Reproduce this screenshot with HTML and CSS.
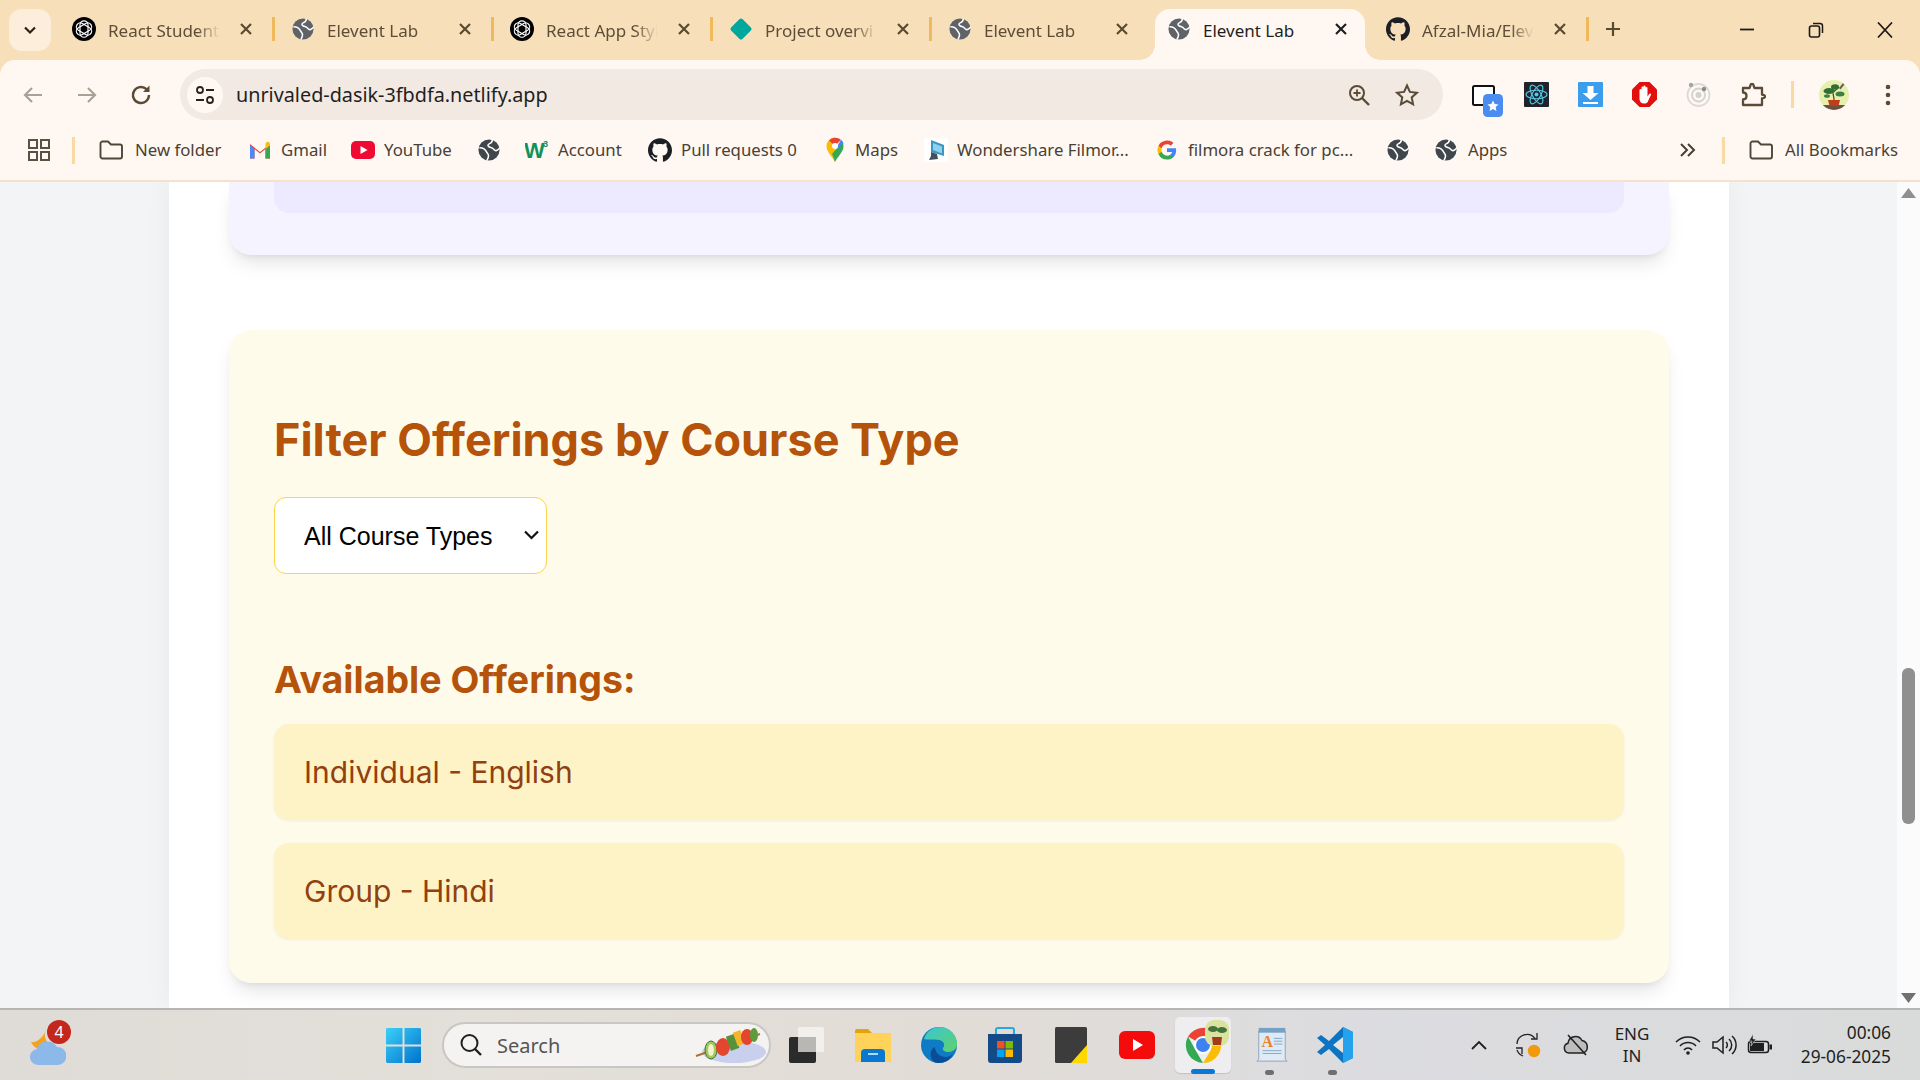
FILE: index.html
```html
<!DOCTYPE html>
<html lang="en">
<head>
<meta charset="utf-8">
<title>Elevent Lab</title>
<link rel="stylesheet" href="styles.css">
</head>
<body>
<svg class="defs" aria-hidden="true">
  <symbol id="globe" viewBox="0 0 24 24"><circle cx="12" cy="12" r="11.500" fill="currentColor"/><path fill="none" stroke="#fff" stroke-width="1.700" d="M1.500 9.500c3.500-.2 6 1.300 7.300 3.800 1 2 2.700 3 2.700 5 0 1.800-1 3.500-1.800 5M15.500 .8c.3 2.500-1.500 3.700-3.300 4.500-1.700.8-1.700 2.300-.2 3.200 1.800 1 3.500.5 4.700 2.300 1 1.500 2 2.300 3.500 1.700 1.300-.5 2.500-1.500 3.500-2.800"/></symbol>
  <symbol id="gpt" viewBox="0 0 24 24"><circle cx="12" cy="12" r="12" fill="#000"/><g fill="none" stroke="#fff" stroke-width="1.150"><rect x="8" y="3.800" width="8" height="16.400" rx="4"/><rect x="8" y="3.800" width="8" height="16.400" rx="4" transform="rotate(60 12 12)"/><rect x="8" y="3.800" width="8" height="16.400" rx="4" transform="rotate(120 12 12)"/></g></symbol>
  <symbol id="github" viewBox="0 0 24 24"><path fill="currentColor" d="M12 .297c-6.630 0-12 5.373-12 12 0 5.303 3.438 9.800 8.205 11.385.6.113.82-.258.82-.577 0-.285-.01-1.040-.015-2.040-3.338.724-4.042-1.610-4.042-1.610C4.422 18.070 3.633 17.700 3.633 17.700c-1.087-.744.084-.729.084-.729 1.205.084 1.838 1.236 1.838 1.236 1.070 1.835 2.809 1.305 3.495.998.108-.776.417-1.305.76-1.605-2.665-.3-5.466-1.332-5.466-5.930 0-1.310.465-2.380 1.235-3.220-.135-.303-.54-1.523.105-3.176 0 0 1.005-.322 3.300 1.230.96-.267 1.980-.399 3-.405 1.020.006 2.040.138 3 .405 2.280-1.552 3.285-1.230 3.285-1.230.645 1.653.24 2.873.12 3.176.765.84 1.230 1.910 1.230 3.220 0 4.610-2.805 5.625-5.475 5.920.42.36.81 1.096.81 2.220 0 1.606-.015 2.896-.015 3.286 0 .315.21.69.825.57C20.565 22.092 24 17.592 24 12.297c0-6.627-5.373-12-12-12"/></symbol>
  <symbol id="x" viewBox="0 0 16 16"><path d="M3 3l10 10M13 3L3 13" fill="none" stroke="currentColor" stroke-width="2.200"/></symbol>
  <symbol id="folder" viewBox="0 0 24 20"><path d="M1.500 3.500a2 2 0 0 1 2-2h5.500l3 3h9a2 2 0 0 1 2 2v10a2 2 0 0 1-2 2h-17.500a2 2 0 0 1-2-2z" fill="none" stroke="currentColor" stroke-width="1.900"/></symbol>
</svg>

<header class="strip">
  <button class="tabs-menu" type="button"><svg class="i14" viewBox="0 0 14 14"><path d="M2 4.500l5 5 5-5" fill="none" stroke="#2a2118" stroke-width="2.200"/></svg></button>
  <div class="tab"><span class="fav"><svg class="i24"><use href="#gpt"/></svg></span><span class="title">React Student</span><svg class="close"><use href="#x"/></svg></div><i class="sep"></i>
  <div class="tab"><span class="fav grey"><svg class="i22"><use href="#globe"/></svg></span><span class="title">Elevent Lab</span><svg class="close"><use href="#x"/></svg></div><i class="sep"></i>
  <div class="tab"><span class="fav"><svg class="i24"><use href="#gpt"/></svg></span><span class="title">React App Styl</span><svg class="close"><use href="#x"/></svg></div><i class="sep"></i>
  <div class="tab"><span class="fav"><svg class="i24" viewBox="0 0 24 24"><rect x="4" y="4" width="16" height="16" rx="2" fill="#00a79d" transform="rotate(45 12 12)"/></svg></span><span class="title">Project overvi</span><svg class="close"><use href="#x"/></svg></div><i class="sep"></i>
  <div class="tab"><span class="fav grey"><svg class="i22"><use href="#globe"/></svg></span><span class="title">Elevent Lab</span><svg class="close"><use href="#x"/></svg></div><i class="sep off"></i>
  <div class="tab active"><span class="flare flare-l"></span><span class="flare flare-r"></span><span class="fav grey"><svg class="i22"><use href="#globe"/></svg></span><span class="title">Elevent Lab</span><svg class="close"><use href="#x"/></svg></div><i class="sep off"></i>
  <div class="tab"><span class="fav dark"><svg class="i24"><use href="#github"/></svg></span><span class="title">Afzal-Mia/Elev</span><svg class="close"><use href="#x"/></svg></div><i class="sep"></i>
  <svg class="plus" viewBox="0 0 16 16"><path d="M8 1v14M1 8h14" stroke="#5b4a33" stroke-width="2.200"/></svg>
  <div class="winctl">
    <svg class="i16" viewBox="0 0 16 16"><path d="M1 7.500h14" stroke="#1d1a16" stroke-width="1.800"/></svg>
    <svg class="i16" viewBox="0 0 16 16"><rect x="1.500" y="4" width="10" height="11" rx="2" fill="none" stroke="#1d1a16" stroke-width="1.600"/><path d="M5 1.500h7a2.500 2.500 0 0 1 2.500 2.500v7" fill="none" stroke="#1d1a16" stroke-width="1.500"/></svg>
    <svg class="i16" viewBox="0 0 16 16"><path d="M1 .5l14 15M15 .5L1 15.500" stroke="#1d1a16" stroke-width="1.700"/></svg>
  </div>
</header>

<nav class="toolbar">
  <span class="tb"><svg class="i24" viewBox="0 0 24 24"><path d="M21 12H4M11 5l-7 7 7 7" fill="none" stroke="#a9a198" stroke-width="2.200"/></svg></span>
  <span class="tb ml18"><svg class="i24" viewBox="0 0 24 24"><path d="M3 12h17M13 5l7 7-7 7" fill="none" stroke="#a9a198" stroke-width="2.200"/></svg></span>
  <span class="tb ml18"><svg class="i24" viewBox="0 0 24 24"><path d="M20 12a8 8 0 1 1-2.500-5.800" fill="none" stroke="#5a4a36" stroke-width="2.400"/><path d="M20.500 2.500v6.500h-6.500z" fill="#5a4a36"/></svg></span>
  <div class="omni">
    <span class="tune"><svg class="i22" viewBox="0 0 22 22"><circle cx="6" cy="6" r="3" fill="none" stroke="#2a2118" stroke-width="1.800"/><path d="M12 6h8M2 16h8" stroke="#2a2118" stroke-width="1.800"/><circle cx="16" cy="16" r="3" fill="none" stroke="#2a2118" stroke-width="1.800"/></svg></span>
    <span class="url">unrivaled-dasik-3fbdfa.netlify.app</span>
    <span class="tb"><svg class="i24" viewBox="0 0 24 24"><circle cx="10" cy="10" r="7" fill="none" stroke="#5a4a36" stroke-width="2"/><path d="M15 15l7 7" stroke="#5a4a36" stroke-width="2.400"/><path d="M10 6.500v7M6.500 10h7" stroke="#5a4a36" stroke-width="1.800"/></svg></span>
    <span class="tb ml12"><svg class="i24" viewBox="0 0 24 24"><path d="M12 2.500l2.900 6.400 7 .8-5.200 4.700 1.400 6.900-6.100-3.500-6.100 3.500 1.400-6.900-5.200-4.700 7-.8z" fill="none" stroke="#5a4a36" stroke-width="2"/></svg></span>
  </div>
  <span class="tb ml27"><svg class="ext-star" viewBox="0 0 32 32"><rect x="1" y="1" width="21" height="19" rx="1.500" fill="#fff" stroke="#111" stroke-width="2"/><rect x="11" y="9" width="20" height="23" rx="4.500" fill="#4a8cf0"/><path d="M21 15.500l1.700 3.500 3.800.5-2.800 2.600.7 3.800-3.400-1.800-3.400 1.800.7-3.800-2.800-2.600 3.800-.5z" fill="#fff"/></svg></span>
  <span class="tb ml12"><svg class="i25" viewBox="0 0 25 25"><rect width="25" height="25" rx="1" fill="#20232a"/><g fill="none" stroke="#55c8e8" stroke-width="1.100"><ellipse cx="12.500" cy="12.500" rx="10.500" ry="4.200"/><ellipse cx="12.500" cy="12.500" rx="10.500" ry="4.200" transform="rotate(60 12.500 12.500)"/><ellipse cx="12.500" cy="12.500" rx="10.500" ry="4.200" transform="rotate(120 12.500 12.500)"/></g><circle cx="12.500" cy="12.500" r="2" fill="#55c8e8"/></svg></span>
  <span class="tb ml18"><svg class="i25" viewBox="0 0 25 25"><rect width="25" height="25" rx="1" fill="#3b9dee"/><path d="M9.500 4h6v7h5l-8 7-8-7h5z" fill="#fff"/><rect x="5" y="20" width="15" height="2" fill="#fff"/></svg></span>
  <span class="tb ml18"><svg class="i25" viewBox="0 0 25 25"><path d="M7.500 0h10l7.500 7.500v10L17.500 25h-10L0 17.500v-10z" fill="#e30f0f"/><path d="M7.500 13.500V8a1 1 0 0 1 2 0v4V5.500a1 1 0 0 1 2 0V12V4.500a1 1 0 0 1 2 0V12V6a1 1 0 0 1 2 0v8.500l1.500-2.300c.9-1.200 2.500-.4 1.900.9l-2.800 6C15.800 20.500 14.500 21.500 13 21.500h-1c-2.800 0-4.500-2-4.500-4.500z" fill="#fff"/></svg></span>
  <span class="tb ml18"><svg class="i25" viewBox="0 0 25 25"><circle cx="12.500" cy="13" r="11" fill="none" stroke="#dcdad6" stroke-width="1.800"/><circle cx="12.500" cy="13" r="6.500" fill="none" stroke="#d4d2ce" stroke-width="1.800"/><circle cx="12.500" cy="13" r="3" fill="#d4d2ce"/><circle cx="5" cy="3" r="2.200" fill="#a8a6a2"/><circle cx="18" cy="7" r="2.200" fill="#8d8b88"/></svg></span>
  <span class="tb ml19"><svg class="i25" viewBox="0 0 25 25"><path d="M2 6h6.500c.2-1 .8-1.500 1-3 .3-1.500 2.700-1.500 3 0 .2 1.500.8 2 1 3H21v6.500c1 .2 1.600.5 2.200.7 1 .4 1 2.200 0 2.600-.6.2-1.200.5-2.200.7V23H2v-5.500c2 0 3.500-1.500 3.500-3.500S4 10.500 2 10.500z" fill="none" stroke="#5a4a36" stroke-width="2.300" stroke-linejoin="round"/></svg></span>
  <i class="tsep"></i>
  <span class="tb ml22"><svg class="i30" viewBox="0 0 30 30"><defs><clipPath id="avc"><circle cx="15" cy="15" r="15"/></clipPath></defs><g clip-path="url(#avc)"><rect width="30" height="30" fill="#e7efad"/><rect y="25" width="30" height="5" fill="#6b5142"/><path d="M9 20h12l-1.500 6h-9z" fill="#bf3d1c"/><path d="M15 20c0-5-2-7-1-11M14 12c2-1 4-3 6-5" stroke="#5a4a2a" stroke-width="1.300" fill="none"/><ellipse cx="10" cy="11" rx="5.500" ry="3" fill="#2f6e35"/><ellipse cx="16" cy="7" rx="4" ry="2.800" fill="#2f6e35"/><ellipse cx="21" cy="14" rx="4.500" ry="2.500" fill="#3b8040"/><ellipse cx="8" cy="16" rx="3" ry="1.800" fill="#3b8040"/><path d="M20 8l4-5 1.500 1.500-4 5z" fill="#66625c"/></g></svg></span>
  <span class="tb ml18"><svg class="i24" viewBox="0 0 24 24"><circle cx="12" cy="4" r="2.300" fill="#5a4a36"/><circle cx="12" cy="12" r="2.300" fill="#5a4a36"/><circle cx="12" cy="20" r="2.300" fill="#5a4a36"/></svg></span>
</nav>

<nav class="bookmarks">
  <span class="bm"><svg class="i22" viewBox="0 0 22 22"><g fill="none" stroke="#5a5046" stroke-width="2"><rect x="1" y="1" width="8" height="8"/><rect x="13" y="1" width="8" height="8"/><rect x="1" y="13" width="8" height="8"/><rect x="13" y="13" width="8" height="8"/></g></svg></span>
  <i class="bsep"></i>
  <span class="bm wide"><svg class="bi folder"><use href="#folder"/></svg><span>New folder</span></span>
  <span class="bm"><svg class="bi" viewBox="0 0 24 20"><path d="M2 18.500V4l10 8 10-8v14.500h-4.500V9L12 13.500 6.500 9v9.500z" fill="#e8463a"/><path d="M2 18.500h4.500V9L2 5z" fill="#4a8af4"/><path d="M22 18.500h-4.500V9L22 5z" fill="#34a853"/><path d="M17.500 9L22 5.500V3.800c0-1.800-2-2.500-3.300-1.500l-1.200 1z" fill="#f9bc15"/></svg><span>Gmail</span></span>
  <span class="bm"><svg class="bi" viewBox="0 0 24 20"><rect y="1" width="24" height="18" rx="5" fill="#f00a33"/><path d="M9.500 6l7 4-7 4z" fill="#fff"/></svg><span>YouTube</span></span>
  <span class="bm"><svg class="i22 slate"><use href="#globe"/></svg></span>
  <span class="bm"><svg class="bi w3" viewBox="0 0 24 22"><text x="-1" y="19" class="w3-w">W</text><text x="18" y="8" class="w3-s">3</text></svg><span>Account</span></span>
  <span class="bm"><svg class="bi gh"><use href="#github"/></svg><span>Pull requests 0</span></span>
  <span class="bm"><svg class="pin" viewBox="0 0 18 26"><path d="M9 25C6 19 .5 15 .5 9a8.500 8.500 0 0 1 8.500-8.500z" fill="#fbbc04"/><path d="M9 25c3-6 8.500-10 8.500-16 0-1.500-.4-3-1.100-4.200L6 17c1.200 2.500 2.200 5 3 8z" fill="#34a853"/><path d="M3 3.500A8.500 8.500 0 0 1 15 2.800L9 9z" fill="#ea4335"/><path d="M15 2.800c1 .9 1.900 2 2.500 3.500L9 13z" fill="#4285f4"/><circle cx="9" cy="9" r="3" fill="#fff"/></svg><span>Maps</span></span>
  <span class="bm"><svg class="bi" viewBox="0 0 24 24"><rect width="24" height="24" fill="#fff"/><path d="M7 2l13 5v11L7 14z" fill="#3a96c4"/><path d="M9 5l9 3.500v7L9 12z" fill="#8fd0ea"/><path d="M7 14l6 2 1 5-9 1 2-4z" fill="#43505a"/></svg><span>Wondershare Filmor...</span></span>
  <span class="bm wide"><svg class="g" viewBox="0 0 24 24"><path d="M23 12.300c0-.8-.1-1.600-.2-2.300H12v4.400h6.200a5.300 5.300 0 0 1-2.300 3.400v2.900h3.700c2.100-2 3.400-4.900 3.400-8.400z" fill="#4285f4"/><path d="M12 23.500c3.100 0 5.700-1 7.600-2.800l-3.700-2.900c-1 .7-2.400 1.100-3.900 1.100-3 0-5.500-2-6.400-4.700H1.800v3A11.500 11.500 0 0 0 12 23.500z" fill="#34a853"/><path d="M5.600 14.200a6.900 6.900 0 0 1 0-4.400v-3H1.800a11.500 11.500 0 0 0 0 10.400z" fill="#fbbc05"/><path d="M12 5.100c1.700 0 3.200.6 4.400 1.700l3.300-3.300A11.500 11.500 0 0 0 1.800 6.800l3.800 3c.9-2.700 3.400-4.700 6.400-4.700z" fill="#ea4335"/></svg><span>filmora crack for pc...</span></span>
  <span class="bm"><svg class="i22 slate"><use href="#globe"/></svg></span>
  <span class="bm wide"><svg class="i22 slate"><use href="#globe"/></svg><span>Apps</span></span>
  <span class="bm"><svg class="i20" viewBox="0 0 20 20"><path d="M3 4l6 6-6 6M10 4l6 6-6 6" fill="none" stroke="#4a3f33" stroke-width="2"/></svg></span>
  <i class="bsep"></i>
  <span class="bm wide folder-item"><svg class="bi folder"><use href="#folder"/></svg><span>All Bookmarks</span></span>
</nav>

<div class="viewport">
  <div class="gutter"></div>
  <main class="sheet">
    <section class="card card-violet"><div class="violet-inner"></div></section>
    <section class="card card-amber">
      <h2>Filter Offerings by Course Type</h2>
      <div class="select-wrap">
        <select class="course-select"><option>All Course Types</option><option>Individual</option><option>Group</option></select>
        <svg class="select-arrow" viewBox="0 0 16 10"><path d="M1.500 1.500L8 8l6.500-6.500" fill="none" stroke="#111" stroke-width="2.200"/></svg>
      </div>
      <h3>Available Offerings:</h3>
      <ul class="offerings">
        <li>Individual - English</li>
        <li>Group - Hindi</li>
      </ul>
    </section>
  </main>
  <div class="gutter"></div>
  <div class="scrollbar">
    <svg class="arrow" viewBox="0 0 15 10"><path d="M7.500 0L15 10H0z" fill="#8f8f8f"/></svg>
    <div class="thumb"></div>
    <svg class="arrow down" viewBox="0 0 15 10"><path d="M0 0h15L7.500 10z" fill="#707070"/></svg>
  </div>
</div>

<footer class="taskbar">
  <span class="weather"><svg class="i36x" viewBox="0 0 36 40"><path d="M16 4a12 12 0 0 0 6 16A13 13 0 0 1 1 16c4 1 12-3 15-12z" fill="#f3a323"/><path d="M9 39a8 8 0 0 1-2-16 11 11 0 0 1 20-2 9 9 0 0 1 1 18z" fill="#8db8ea"/></svg><b class="badge">4</b></span>
  <span class="tk"><svg class="win" viewBox="0 0 36 36"><defs><linearGradient id="wg" x1="0" y1="0" x2="1" y2="1"><stop offset="0" stop-color="#3cd0f8"/><stop offset="1" stop-color="#0072cc"/></linearGradient></defs><path d="M0 1.500A1.500 1.500 0 0 1 1.500 0H17v17H0zM19 0h15.500A1.500 1.500 0 0 1 36 1.500V17H19zM0 19h17v17H1.500A1.500 1.500 0 0 1 0 34.500zM19 19h17v15.500a1.500 1.500 0 0 1-1.500 1.500H19z" fill="url(#wg)"/></svg></span>
  <div class="search">
    <svg class="i24" viewBox="0 0 24 24"><circle cx="10.500" cy="10" r="8" fill="none" stroke="#1f1f1f" stroke-width="2"/><path d="M16 16l6 6" stroke="#1f1f1f" stroke-width="2.400"/></svg>
    <span class="search-label">Search</span>
    <svg class="kebab" viewBox="0 0 72 38"><ellipse cx="40" cy="26" rx="32" ry="11" fill="#c8d0ee"/><path d="M2 30L66 8" stroke="#a8743a" stroke-width="2"/><ellipse cx="17" cy="24" rx="6" ry="9" fill="#9ecb5c" stroke="#416d25"/><ellipse cx="17" cy="24" rx="3" ry="6" fill="#f1f3d0"/><ellipse cx="29" cy="21" rx="7" ry="9" fill="#e4452e"/><rect x="34" y="9" width="9" height="15" fill="#57913a" transform="rotate(-20 38 16)"/><rect x="41" y="5" width="8" height="14" fill="#f3b52b" transform="rotate(-20 45 12)"/><ellipse cx="53" cy="11" rx="6" ry="8" fill="#e4452e"/><ellipse cx="60" cy="9" rx="4" ry="7" fill="#5d9c3b"/></svg>
  </div>
  <span class="tk"><svg class="i36" viewBox="0 0 36 36"><rect x="9" y="0" width="26" height="25" rx="1.500" fill="#f3f2f0" opacity=".9"/><rect y="10" width="27" height="26" rx="2" fill="#2b2b2b"/><rect x="9" y="10" width="18" height="15" fill="#b9b7b4"/></svg></span>
  <span class="tk"><svg class="i36" viewBox="0 0 36 36"><path d="M0 4a2 2 0 0 1 2-2h11l4 4H0z" fill="#e2a30d"/><path d="M0 6h36v29H0z" fill="#ffd35a"/><path d="M6 35v-9a4 4 0 0 1 4-4h16a4 4 0 0 1 4 4v9z" fill="#0a78cf"/><rect x="13" y="26" width="10" height="2" fill="#a9dbff"/></svg></span>
  <span class="tk"><svg class="i36" viewBox="0 0 36 36"><defs><linearGradient id="eg" x1="0" y1="0" x2="1" y2="1"><stop offset="0" stop-color="#39c6d6"/><stop offset="1" stop-color="#5fd26a"/></linearGradient></defs><circle cx="18" cy="18" r="18" fill="#0f7bc5"/><path d="M3 12C6 3 13 0 19 0c10 0 17 8 17 17 0 5-4 8-9 8-3 0-6-2-5-4 2-2 2-7-4-8-6-1-12 0-15-1z" fill="url(#eg)"/><path d="M14 20c0 6 5 10 11 10 2 0 5-1 7-3-3 6-9 9-14 9-4 0-7-2-8-6-1-4 0-8 4-10z" fill="#0a4d96"/></svg></span>
  <span class="tk"><svg class="i36" viewBox="0 0 36 36"><path d="M9 7V3a2 2 0 0 1 2-2h14a2 2 0 0 1 2 2v4" fill="none" stroke="#25a9e0" stroke-width="2"/><path d="M1 7h34v26a3 3 0 0 1-3 3H4a3 3 0 0 1-3-3z" fill="#144b86"/><rect x="10" y="14" width="7.500" height="7.500" fill="#f25022"/><rect x="18.500" y="14" width="7.500" height="7.500" fill="#7fba00"/><rect x="10" y="22.500" width="7.500" height="7.500" fill="#00a4ef"/><rect x="18.500" y="22.500" width="7.500" height="7.500" fill="#ffb900"/></svg></span>
  <span class="tk"><svg class="i32" viewBox="0 0 32 36"><rect width="32" height="36" rx="1.500" fill="#3c3c3c"/><path d="M32 18v18H16z" fill="#ffd800"/></svg></span>
  <span class="tk"><svg class="i36" viewBox="0 0 36 28"><rect width="36" height="28" rx="6" fill="#f40b0b"/><path d="M14 8l10 6-10 6z" fill="#fff"/></svg></span>
  <span class="tk chrome"><svg class="chrome-i" viewBox="0 0 36 36"><path d="M18 18L3 9.500A18 18 0 0 1 33.600 9H18z" fill="#ea4335"/><path d="M18 36A18 18 0 0 1 3 9.500L11 24z" fill="#34a853"/><path d="M18 36L26 23 18 9h15.600A18 18 0 0 1 18 36z" fill="#fbbc04"/><circle cx="18" cy="18" r="9" fill="#fff"/><circle cx="18" cy="18" r="7" fill="#3f80f2"/></svg><svg class="chrome-av" viewBox="0 0 24 26"><rect width="24" height="26" rx="9" fill="#d9e29e"/><ellipse cx="8" cy="9" rx="5" ry="3" fill="#43723a"/><ellipse cx="17" cy="10" rx="5" ry="3" fill="#43723a"/><path d="M7 17h10l-1 8H8z" fill="#a33a1d"/></svg><i class="running"></i></span>
  <span class="tk app"><svg class="i36" viewBox="0 0 32 38"><path d="M2 4h28v30l2 2H0l2-2z" fill="#dfeaf4" stroke="#8ca3b8"/><rect x="2" y="1" width="28" height="5" fill="#76a0c4"/><text x="5" y="21" class="note-a">A</text><path d="M18 12h9M18 15h9M18 18h9M6 25h20M6 28h20" stroke="#7ea6cc"/></svg><i class="pip"></i></span>
  <span class="tk app"><svg class="i36" viewBox="0 0 36 36"><path d="M26 0L12 14 4 8 0 11l8 7-8 7 4 3 8-6 14 14 10-5V5z" fill="#0d74c1"/><path d="M26 0l10 5v26l-10 5z" fill="#24a2ee"/><path d="M26 10L16 18l10 8z" fill="#e6e4e0"/></svg><i class="pip"></i></span>
  <span class="tk"><svg class="i18" viewBox="0 0 18 12"><path d="M2 10l7-7 7 7" fill="none" stroke="#1f1f1f" stroke-width="1.800"/></svg></span>
  <span class="tk"><svg class="i26" viewBox="0 0 26 26"><path d="M2 12A10 10 0 0 1 20 6.500M2 18a10 10 0 0 0 6 6" fill="none" stroke="#222" stroke-width="1.300"/><path d="M22 1v6h-6M1 16h6v6" fill="none" stroke="#222" stroke-width="1.300"/><circle cx="19" cy="19" r="6.200" fill="#f29a0e"/></svg></span>
  <span class="tk"><svg class="i26" viewBox="0 0 26 22"><path d="M6 19a5 5 0 0 1-1-9.800A7.500 7.500 0 0 1 19 6.500 6.500 6.500 0 0 1 20 19z" fill="#bdbdbd" stroke="#222" stroke-width="1.500"/><path d="M5 1l18 20" stroke="#222" stroke-width="1.600"/></svg></span>
  <span class="lang">ENG<br>IN</span>
  <span class="tk"><svg class="i26" viewBox="0 0 26 20"><path d="M1 7a17 17 0 0 1 24 0M5 11a11 11 0 0 1 16 0M9 15a5 5 0 0 1 8 0" fill="none" stroke="#1f1f1f" stroke-width="1.500"/><circle cx="13" cy="18" r="1.800" fill="#1f1f1f"/></svg></span>
  <span class="tk"><svg class="i26" viewBox="0 0 26 22"><path d="M2 8h4l6-5v16l-6-5H2z" fill="none" stroke="#1f1f1f" stroke-width="1.500"/><path d="M15 8a4 4 0 0 1 0 6M18 5a8 8 0 0 1 0 12M21 2a12 12 0 0 1 0 18" fill="none" stroke="#1f1f1f" stroke-width="1.500"/></svg></span>
  <span class="tk"><svg class="i26" viewBox="0 0 26 22"><rect x="1.500" y="7.500" width="20" height="11" rx="2.500" fill="none" stroke="#1f1f1f" stroke-width="1.500"/><rect x="3" y="9" width="14" height="8" fill="#1f1f1f"/><rect x="22.500" y="10.500" width="2.500" height="5" fill="#1f1f1f"/><path d="M6 0L2 7h3l-1 5 5-7H6z" fill="#1f1f1f" stroke="#dcdcdc" stroke-width=".6"/></svg></span>
  <span class="clock">00:06<br>29-06-2025</span>
</footer>
</body>
</html>
```
FILE: styles.css
```css
* { box-sizing: border-box; }
html, body { margin: 0; height: 100%; }
body {
  width: 1920px;
  height: 1080px;
  overflow: hidden;
  display: flex;
  flex-direction: column;
  background: #f7dfba;
  font-family: "Noto Sans", "Open Sans", sans-serif;
  color: #1f1f1f;
}
.defs { width: 0; height: 0; position: absolute; }
svg { display: block; flex: none; }
.i14 { width: 14px; height: 14px; }
.i16 { width: 16px; height: 16px; }
.i18 { width: 18px; height: 12px; }
.i20 { width: 20px; height: 20px; }
.i22 { width: 22px; height: 22px; }
.i24 { width: 24px; height: 24px; }
.i25 { width: 25px; height: 25px; }
.i26 { width: 26px; height: 30px; }
.i30 { width: 30px; height: 30px; }
.i32 { width: 32px; height: 36px; }
.i36 { width: 36px; height: 36px; }
.i36x { width: 36px; height: 40px; }

/* Tab strip */
.strip { flex: none; height: 60px; display: flex; align-items: center; padding-left: 9px; }
.tabs-menu {
  width: 42px; height: 42px; margin: 0 5px 0 0; padding: 0; border: 0;
  border-radius: 13px; background: #fdeedb;
  display: flex; align-items: center; justify-content: center;
}
.tab {
  width: 216px; height: 60px; display: flex; align-items: center;
  padding: 0 0 0 16px; color: #5d4c36; font-size: 17px; position: relative;
}
.fav { width: 24px; height: 24px; display: flex; align-items: center; justify-content: center; margin: 0 12px 2px 0; flex: none; }
.fav.grey { color: #5f6368; }
.fav.dark { color: #1c1f23; }
.title {
  width: 114px; white-space: nowrap; overflow: hidden; flex: none;
  -webkit-mask-image: linear-gradient(90deg, #000 78%, transparent 98%);
  mask-image: linear-gradient(90deg, #000 78%, transparent 98%);
}
.close { width: 16px; height: 16px; margin: 0 0 2px 16px; color: #5b4a2f; flex: none; }
.sep { width: 3px; height: 24px; flex: none; background: #efb95c; margin-bottom: 2px; }
.sep.off { visibility: hidden; }
.tab.active { color: #1f1f1f; }
.tab.active .close { color: #1f1f1f; }
.tab.active .title { -webkit-mask-image: none; mask-image: none; }
.tab.active::before {
  content: ""; position: absolute; left: 4px; right: 2px; top: 9px; bottom: 0;
  background: #fff8f2; border-radius: 15px 15px 0 0; z-index: 0;
}
.tab.active > * { position: relative; z-index: 1; }
.tab.active > .flare { position: absolute; bottom: 0; width: 15px; height: 15px; }
.flare-l { left: -11px; background: radial-gradient(circle at 0 0, transparent 14.5px, #fff8f2 15px); }
.flare-r { right: -13px; background: radial-gradient(circle at 100% 0, transparent 14.5px, #fff8f2 15px); }
.plus { width: 16px; height: 16px; margin: 0 0 2px 16px; }
.winctl { margin-left: 118px; display: flex; gap: 53px; }

/* Toolbar */
.toolbar {
  flex: none; height: 60px; background: #fff8f2; border-radius: 15px 15px 0 0;
  display: flex; align-items: center; padding: 9px 0 0 15px;
  position: relative;
}
.tb { width: 36px; height: 36px; display: flex; align-items: center; justify-content: center; flex: none; }
.ml12 { margin-left: 12px; }
.ml18 { margin-left: 18px; }
.ml19 { margin-left: 19px; }
.ml22 { margin-left: 22px; }
.ml27 { margin-left: 27px; }
.omni {
  width: 1263px; height: 51px; margin-left: 21px; border-radius: 26px;
  background: #f1e9e2; display: flex; align-items: center; padding: 0 18px 0 7px; flex: none;
}
.tune { width: 36px; height: 36px; border-radius: 50%; background: #fff8f2; display: flex; align-items: center; justify-content: center; flex: none; }
.url { margin-left: 13px; font-size: 19.8px; color: #1f1f1f; flex: 1; white-space: nowrap; }
.ext-star { width: 32px; height: 32px; margin-top: 12px; }
.tsep { width: 3px; height: 27px; background: #f9d9a4; margin-left: 20px; flex: none; }

/* Bookmarks */
.bookmarks {
  flex: none; height: 62px; background: #fff8f2; border-bottom: 2px solid #f3e3cd;
  display: grid; align-items: center; padding-left: 28px;
  grid-template-columns: 44px 27px 149px 103px 127px 47px 123px 178px 98px 233px 230px 48px 243px 44px 27px 1fr;
  font-size: 16.8px; color: #4a4034;
}
.bm { display: flex; align-items: center; white-space: nowrap; }
.bm > span { margin: 0 0 2px 9px; }
.bm.wide > span { margin-left: 11px; }
.bm.folder-item > span { margin-left: 12px; }
.bm:nth-child(3) > span { margin-left: 12px; }
.bi { width: 24px; height: 24px; }
.g { width: 20px; height: 20px; }
.folder { color: #4f463a; height: 20px; }
.gh { color: #1c1f23; }
.slate { color: #40464b; }
.pin { width: 18px; height: 26px; }
.bm > .pin + span { margin-left: 11px; }
.w3-w { font: 700 22px "Liberation Sans", sans-serif; fill: #12925a; }
.w3-s { font: 700 9px "Liberation Sans", sans-serif; fill: #12925a; }
.bsep { width: 3px; height: 27px; background: #f9d9a4; display: block; }

/* Page */
.viewport {
  flex: 1; min-height: 0; display: flex; overflow: hidden; background: #f3f4f6;
}
.gutter { flex: 1; }
.gutter:first-child { flex: none; width: 169px; }
.sheet {
  width: 1560px; flex: none; background: #fff; padding: 0 60px;
  display: flex; flex-direction: column; gap: 75px;
  box-shadow: 0 0 25px rgba(0,0,0,.05);
}
.card { border-radius: 0 0 22px 22px; box-shadow: 0 12px 19px -4px rgba(0,0,0,.1), 0 5px 8px -5px rgba(0,0,0,.1); }
.card-violet { background: #f5f3ff; padding: 0 45px 42px 45px; }
.violet-inner { height: 31px; background: #ede9fe; border-radius: 0 0 15px 15px; }
.card-amber {
  background: #fffbeb; border-radius: 22px; padding: 85px 45px 44px 45px;
  font-family: Inter, "Liberation Sans", sans-serif;
}
h2 { margin: 0 0 32px; font-size: 45px; line-height: 50px; font-weight: 700; color: #b45309; }
h3 { margin: 83px 0 22px; font-size: 37.5px; line-height: 45px; font-weight: 700; color: #b45309; }
.select-wrap { position: relative; width: 273px; height: 77px; }
.course-select {
  display: block; width: 100%; height: 100%; padding: 1px 14px 0 29px;
  font: 25px "Liberation Sans", Arial, sans-serif; color: #000;
  background: #fff; border: 1px solid #fcd34d; border-radius: 12px;
  appearance: none; -webkit-appearance: none;
}
.select-arrow { position: absolute; right: 7px; top: 33px; width: 17px; height: 10px; pointer-events: none; }
.offerings { list-style: none; margin: 0; padding: 0; display: flex; flex-direction: column; gap: 23px; }
.offerings li {
  height: 96px; display: flex; align-items: center; padding-left: 30px;
  background: #fef3c7; border-radius: 15px; color: #92400e; font-size: 30px;
  box-shadow: 0 1px 3px rgba(0,0,0,.06);
}

/* Scrollbar */
.scrollbar { width: 23px; flex: none; background: #fbfbfb; display: flex; flex-direction: column; align-items: center; padding: 6px 0 5px; }
.arrow { width: 15px; height: 10px; }
.thumb { width: 13px; height: 156px; margin-top: 470px; background: #8f8f8f; border-radius: 6px; }
.arrow.down { margin-top: auto; }

/* Taskbar */
.taskbar {
  flex: none; height: 72px; border-top: 2px solid #b6b5b3;
  background: linear-gradient(90deg, #dfdcd7 0%, #e3dfd9 25%, #e2dcd6 50%, #dcdce0 70%, #d9dbdb 100%);
  display: grid; align-items: center; padding: 0 29px 0 30px;
  grid-template-rows: 70px;
  grid-template-columns: 356px 56px 347px 66px 66px 66px 68px 64px 56px 79px 63px 153px 45px 48px 47px 65px 36px 36px 53px 1fr;
}
.tk { display: flex; align-items: center; position: relative; height: 100%; }
.weather { position: relative; display: block; width: 36px; height: 40px; margin-top: 2px; }
.badge {
  position: absolute; left: 17px; top: -6px; width: 24px; height: 24px; border-radius: 50%;
  background: #c4281c; color: #fff; font: 400 16px/24px "Noto Sans", sans-serif; text-align: center;
}
.win { width: 35px; height: 35px; }
.search {
  width: 329px; height: 46px; border-radius: 23px; background: #f4f3f1;
  border: 2px solid #c9c7c4; display: flex; align-items: center; padding: 0 3px 0 15px;
}
.search-label { margin-left: 14px; font-size: 20px; color: #555; flex: 1; }
.kebab { width: 72px; height: 38px; }
.chrome { width: 56px; height: 56px; background: #eeeef0; border-radius: 5px; box-shadow: 0 1px 1px rgba(0,0,0,.12); padding-left: 10px; }
.chrome-i { width: 36px; height: 36px; }
.chrome-av { position: absolute; left: 30px; top: 3px; width: 24px; height: 26px; }
.running { position: absolute; left: 16px; bottom: -1px; width: 24px; height: 5px; border-radius: 3px; background: #0a78d4; }
.app { justify-content: flex-start; }
.pip { position: absolute; left: 11px; bottom: 5px; width: 9px; height: 5px; border-radius: 3px; background: #6f6f6f; }
.note-a { font: 700 17px "Liberation Serif", serif; fill: #e9832c; }
.lang { width: 44px; text-align: center; font-size: 17px; line-height: 22px; color: #1f1f1f; }
.clock { text-align: right; font-size: 17.3px; line-height: 24px; color: #1f1f1f; justify-self: end; }
```
